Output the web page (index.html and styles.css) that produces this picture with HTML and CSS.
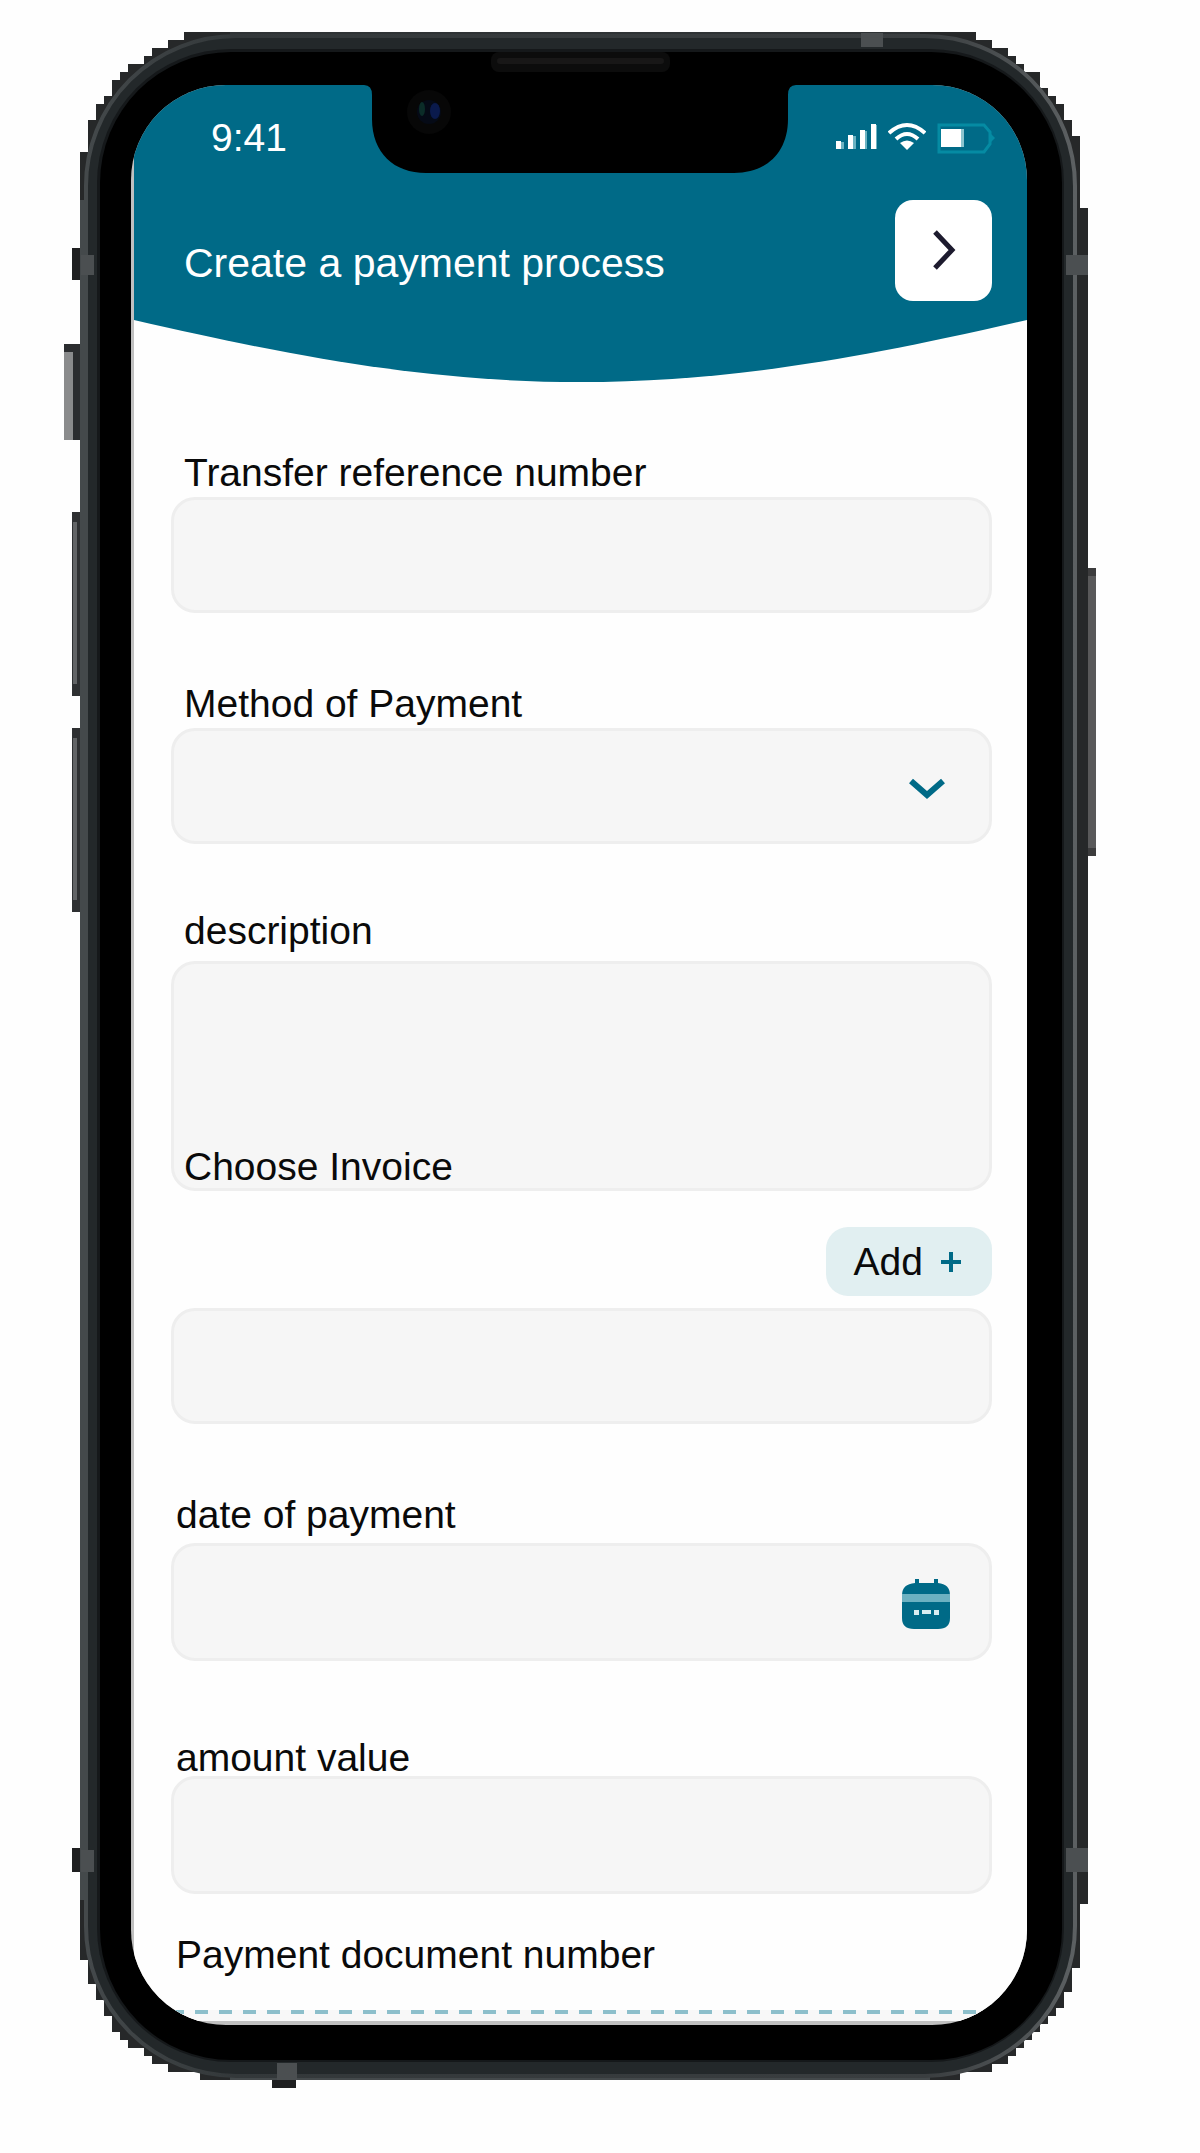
FILE: index.html
```html
<!DOCTYPE html>
<html lang="en">
<head>
<meta charset="utf-8">
<meta name="viewport" content="width=device-width, initial-scale=1">
<title>Create a payment process</title>
<link rel="stylesheet" href="styles.css">
</head>
<body>
<main class="stage">
  <div class="phone">
    <svg class="phone-frame" viewBox="64 32 1034 2056" preserveAspectRatio="none" aria-hidden="true">
      <defs>
        <linearGradient id="rim" x1="0" y1="0" x2="1" y2="0">
          <stop offset="0" stop-color="#44494b"/>
          <stop offset="0.15" stop-color="#33383a"/>
          <stop offset="0.85" stop-color="#3a3e40"/>
          <stop offset="1" stop-color="#5c6062"/>
        </linearGradient>
      </defs>
      <!-- side buttons -->
      <path fill="#8a8b8c" d="M64 344h9v96h-9z"/>
      <path fill="#2b2d2f" d="M73 344h8v96h-8zM64 344h16v8H64z"/>
      <path fill="#2e3032" d="M72 512h9v184h-9zM72 728h9v184h-9z"/>
      <path fill="#626466" d="M73 522h4v162h-4zM73 738h4v162h-4z"/>
      <path fill="#59595a" d="M1084 568h12v288h-12z"/>
      <path fill="#3c3c3d" d="M1082 568h14v8h-14zM1082 848h14v8h-14zM1080 576h4v272h-4z"/>
      <path fill="#1f2021" d="M72 248h9v32h-9zM72 1848h9v24h-9zM272 2078h24v10h-24z"/>
      <!-- stepped silhouette -->
      <path fill="#262829" d="M184 32H976V40H992V48H1008V56H1016V64H1024V72H1040V88H1048V96H1056V104H1064V120H1072V136H1080V208H1088V1904H1080V1968H1072V1992H1064V2008H1056V2016H1048V2024H1040V2032H1032V2040H1024V2048H1016V2056H1008V2064H992V2072H960V2080H200V2072H168V2064H152V2056H144V2048H128V2040H120V2032H112V2016H104V2000H96V1984H88V1960H80V152H88V120H96V104H104V96H112V80H120V72H128V64H144V56H152V48H168V40H184Z"/>
      <path fill="#44494b" d="M80 200h8v1700h-8zM230 2072h700v8H230z"/>
      <path fill="#2f3335" d="M230 32h690v10H230z"/>
      <rect x="86" y="36" width="989" height="2040" rx="150" fill="#23282a" stroke="url(#rim)" stroke-width="4"/>
      <rect x="97" y="49" width="967" height="2013" rx="134" fill="#15181a"/>
      <rect x="100" y="52" width="962" height="2008" rx="131" fill="#000"/>
      <!-- antenna bands -->
      <path fill="#4b4f51" d="M81 255h13v20H81zM81 1850h13v22H81zM861 33h22v14h-22zM1066 255h22v20h-22zM1066 1848h22v24h-22zM277 2063h20v17h-20z"/>
      <!-- earpiece -->
      <rect x="491" y="52" width="179" height="20" rx="8" fill="#0c0c0c"/>
      <rect x="497" y="58" width="167" height="6" rx="3" fill="#181717"/>
    </svg>

    <div class="screen">
      <header class="header">
        <svg class="notch" viewBox="0 0 432 88" aria-hidden="true">
          <path fill="#000" d="M0 0H432Q424 0 424 10V34C424 68 402 88 370 88H62C30 88 8 68 8 34V10Q8 0 0 0Z"/>
          <circle cx="65" cy="27" r="22" fill="#070707"/>
          <circle cx="65" cy="27" r="12" fill="#050a16"/>
          <ellipse cx="58" cy="24" rx="3" ry="7" fill="#0b2c28"/>
          <ellipse cx="71" cy="26" rx="5" ry="8" fill="#0a1a4c"/>
        </svg>
        <div class="status">
          <span>9:41</span>
          <div class="status-icons">
            <svg width="42" height="32" viewBox="0 0 42 32" aria-hidden="true">
              <path fill="#6cb3c2" d="M5 20h4v7H5zM17 14h4v13h-4zM28 9h4v18h-4zM38 3h4v24h-4z"/>
              <path fill="#fff" d="M1 19h5v8H1zM13 13h5v14h-5zM25 8h5v19h-5zM36 2h5v25h-5z"/>
            </svg>
            <svg width="38" height="32" viewBox="0 0 38 32" fill="none" stroke="#fff" stroke-width="4" aria-hidden="true">
              <path d="M1 11Q19-5 37 11"/>
              <path d="M8 17Q19 7 30 17"/>
              <path fill="#fff" stroke="none" d="M12 21Q19 16 26 21L19 28Z"/>
            </svg>
            <svg width="58" height="32" viewBox="0 0 58 32" aria-hidden="true">
              <path fill="none" stroke="#058ba3" stroke-width="3" d="M2 3H47L53 10V22L47 30H2Z"/>
              <path fill="#058ba3" d="M53 11l5 5-5 5z"/>
              <path fill="#fff" d="M4 7h20v18H4z"/>
              <path fill="#8cc4cf" d="M24 7h3v18h-3z"/>
            </svg>
          </div>
        </div>
        <div class="title-row">
          <h1>Create a payment process</h1>
          <button class="back" type="button" aria-label="Back">
            <svg width="24" height="44" viewBox="0 0 24 44" fill="none" stroke="#1d1b2e" stroke-width="5" aria-hidden="true">
              <path d="M3 4L20 22L3 40"/>
            </svg>
          </button>
        </div>
      </header>
      <svg class="curve" viewBox="0 0 893 62" preserveAspectRatio="none" aria-hidden="true">
        <path fill="#006a87" d="M0 0H893C720 40 590 62 446 62S173 40 0 0Z"/>
      </svg>

      <form class="form">
        <div class="field">
          <label for="reference">Transfer reference number</label>
          <input class="box" id="reference" type="text">
        </div>
        <div class="field">
          <label for="method">Method of Payment</label>
          <div class="control">
            <select class="box" id="method"><option></option></select>
            <svg class="control-icon chevron" viewBox="0 0 36 26" fill="none" stroke="#006a87" stroke-width="6" aria-hidden="true">
              <path d="M2 8L18 22L34 8"/>
            </svg>
          </div>
        </div>
        <div class="field field-description">
          <label for="description">description</label>
          <textarea class="box" id="description"></textarea>
        </div>
        <div class="field field-invoice">
          <label for="invoice">Choose Invoice</label>
          <button class="add" type="button">Add
            <svg width="20" height="20" viewBox="0 0 20 20" aria-hidden="true"><path fill="#006a87" d="M8 0h4v8h8v4h-8v8H8v-8H0V8h8z"/></svg>
          </button>
          <input class="box" id="invoice" type="text">
        </div>
        <div class="field field-date">
          <label for="date">date of payment</label>
          <div class="control">
            <input class="box" id="date" type="text">
            <svg class="control-icon calendar" viewBox="0 0 52 56" aria-hidden="true">
              <path fill="#006a87" d="M15 5h4v4h15V5h4v4q12 1 12 12v23q0 11-12 11H14Q2 55 2 44V21Q2 10 15 9z"/>
              <path fill="#6cb1c1" d="M2 20h48v8H2z"/>
              <path fill="#d9edf1" d="M14 36h5v5h-5zM22 36h9v4h-9zM34 36h5v5h-5z"/>
            </svg>
          </div>
        </div>
        <div class="field field-amount">
          <label for="amount">amount value</label>
          <input class="box" id="amount" type="text">
        </div>
        <div class="field field-document">
          <span class="label">Payment document number</span>
          <div class="upload"></div>
        </div>
      </form>
    </div>
  </div>
</main>
</body>
</html>
```
FILE: styles.css
```css
*, *::before, *::after {
  box-sizing: border-box;
}

body {
  margin: 0;
  background: #fefefe;
  color: #0a0a0a;
  font-family: "Liberation Sans", Arial, sans-serif;
  font-size: 39px;
  line-height: 36px;
}

button, input, select, textarea {
  margin: 0;
  font: inherit;
  color: inherit;
}

.stage {
  padding: 32px 102px 65px 64px;
}

/* Device */
.phone {
  position: relative;
  padding: 53px 71px 63px 67px;
}

.phone-frame {
  position: absolute;
  inset: 0;
  width: 100%;
  height: 100%;
}

/* The padding shows as a thin grey edge along the left and bottom */
.screen {
  position: relative;
  overflow: hidden;
  padding: 0 0 4px 3px;
  border-radius: 95px;
  background: #c0c0c0;
}

/* Header */
.header {
  position: relative;
  padding: 35px 35px 19px 50px;
  background: #006a87;
  color: #fff;
}

.notch {
  position: absolute;
  top: 0;
  left: 50%;
  width: 432px;
  height: 88px;
  margin-left: -217px;
}

.status {
  display: flex;
  justify-content: space-between;
  align-items: center;
  margin-right: -3px;
  padding-left: 27px;
}

.status-icons {
  display: flex;
  gap: 11px;
}

.status-icons svg {
  display: block;
}

.title-row {
  display: flex;
  justify-content: space-between;
  align-items: flex-end;
  margin-top: 44px;
}

h1 {
  margin: 0;
  padding-bottom: 14px;
  font-size: 41px;
  font-weight: 400;
  line-height: 48px;
}

.back {
  display: grid;
  place-items: center;
  width: 97px;
  height: 101px;
  padding: 0 0 2px;
  border: 0;
  border-radius: 18px;
  background: #fff;
}

.curve {
  display: block;
  width: 100%;
  height: 62px;
  background: #fefefe;
}

/* Form */
.form {
  padding: 0 35px 0 37px;
  background: #fefefe;
}

.field {
  display: flex;
  flex-direction: column;
  gap: 6px;
  padding-top: 73px;
}

label, .label {
  padding-left: 13px;
}

.box {
  display: block;
  width: 100%;
  height: 116px;
  padding: 0 24px;
  border: 3px solid #eeeeee;
  border-radius: 24px;
  background: #f6f6f6;
  appearance: none;
  outline: 0;
}

textarea.box {
  height: 230px;
  padding: 20px 24px;
  resize: none;
}

.control {
  position: relative;
}

.control-icon {
  position: absolute;
  top: 50%;
  transform: translateY(-50%);
  pointer-events: none;
}

.chevron {
  right: 47px;
  width: 36px;
  height: 26px;
}

.calendar {
  right: 40px;
  width: 52px;
  height: 56px;
}

.field-description {
  gap: 12px;
  padding-top: 69px;
}

/* The invoice label rides over the foot of the description box */
.field-invoice {
  position: relative;
  gap: 12px;
  margin-top: -42px;
  padding-top: 0;
}

.add {
  display: flex;
  align-items: center;
  align-self: flex-end;
  gap: 18px;
  height: 69px;
  margin-top: 30px;
  padding: 0 31px 0 28px;
  border: 0;
  border-radius: 22px;
  background: #e1eff1;
}

.field-date {
  gap: 10px;
}

.field-date label,
.field-amount label,
.field-document .label {
  padding-left: 5px;
}

.field-date .box,
.field-amount .box {
  height: 118px;
}

.field-amount {
  gap: 0;
  padding-top: 79px;
}

.field-document {
  gap: 37px;
  padding-top: 43px;
}

.upload {
  height: 11px;
  background: repeating-linear-gradient(90deg, #8dbfcb 0 13px, transparent 13px 24px) 0 0 / 100% 4px no-repeat, #f8f8f8;
}
```
